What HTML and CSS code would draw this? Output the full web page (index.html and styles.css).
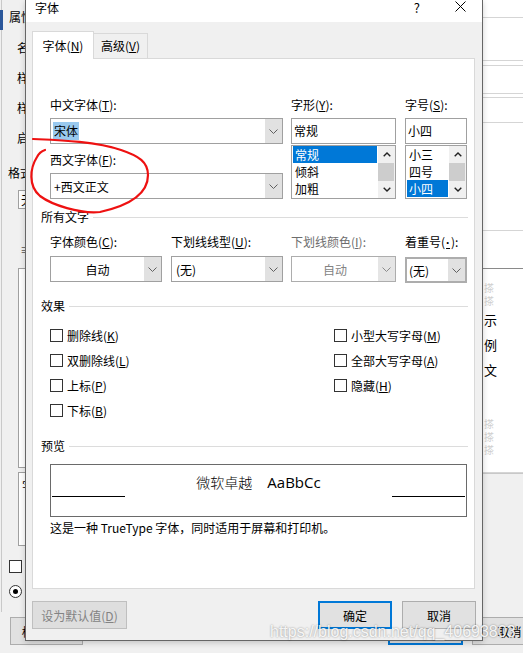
FILE: index.html
```html
<!DOCTYPE html>
<html lang="zh-CN">
<head>
<meta charset="utf-8">
<title>字体</title>
<link rel="stylesheet" href="styles.css">
</head>
<body>
<div class="desk">
  <div class="bg">
    <div class="bg-main">
      <div class="bg-left">
        <div class="bl-head"><span class="bl-accent"></span><span class="bl-title">属性</span></div>
        <div class="bl-item bl-first">名</div>
        <div class="bl-item">样</div>
        <div class="bl-item">样</div>
        <div class="bl-item">启</div>
        <div class="bl-fmt">格式</div>
        <div class="bl-box">无</div>
        <div class="bl-icon">≡</div>
        <div class="bl-panel"></div>
        <div class="bl-panel2">字</div>
        <div class="bl-check"></div>
        <div class="bl-radio"></div>
      </div>
      <div class="bg-mid"></div>
      <div class="bg-right">
        <div class="br-wrap">
          <div class="br-row br-a"></div>
          <div class="br-row br-b"></div>
          <div class="br-row br-c"></div>
          <div class="br-row br-d"></div>
          <div class="br-row br-e"></div>
          <div class="br-row br-f"></div>
          <div class="br-row br-g"></div>
          <div class="br-row br-h"></div>
          <div class="br-sample">
            <span class="br-faint">搽</span>
            <span class="br-faint">搽</span>
            <span class="br-big">示</span>
            <span class="br-big">例</span>
            <span class="br-big">文</span>
            <span class="br-faint br-f2">搽</span>
            <span class="br-faint">搽</span>
            <span class="br-faint">搽</span>
          </div>
        </div>
      </div>
    </div>
    <div class="bg-bottom">
      <div class="bg-btn bg-btn-fmt">格式(O) ▾</div>
      <div class="bg-btn bg-btn-ok">确定</div>
      <div class="bg-btn bg-btn-cancel">取消</div>
    </div>
  </div>

  <div class="dialog">
    <div class="titlebar">
      <span class="tb-title">字体</span>
      <span class="tb-help">?</span>
      <span class="tb-close"><svg width="11" height="11" viewBox="0 0 11 11"><path d="M0.5 0.5 L10.5 10.5 M10.5 0.5 L0.5 10.5" stroke="#000" stroke-width="1" fill="none"/></svg></span>
    </div>
    <div class="dlg-body">
      <div class="tabs">
        <div class="tab tab-active">字体(<u>N</u>)</div>
        <div class="tab">高级(<u>V</u>)</div>
      </div>
      <div class="panel">
        <div class="fgrid">
          <div class="stack span-a">
            <div class="lbl">中文字体(<u>T</u>):</div>
            <div class="combo"><span class="val"><span class="sel">宋体</span></span><span class="dd"><svg width="9" height="5" viewBox="0 0 9 5"><path d="M0.5 0.5 L4.5 4.5 L8.5 0.5" stroke="#606060" stroke-width="1" fill="none"/></svg></span></div>
            <div class="lbl lbl-2">西文字体(<u>F</u>):</div>
            <div class="combo"><span class="val">+西文正文</span><span class="dd"><svg width="9" height="5" viewBox="0 0 9 5"><path d="M0.5 0.5 L4.5 4.5 L8.5 0.5" stroke="#606060" stroke-width="1" fill="none"/></svg></span></div>
          </div>
          <div class="stack col-c">
            <div class="lbl">字形(<u>Y</u>):</div>
            <div class="tbox">常规</div>
            <div class="list">
              <div class="items">
                <div class="item on">常规</div>
                <div class="item">倾斜</div>
                <div class="item">加粗</div>
              </div>
              <div class="sbar">
                <span class="arr"><svg width="8" height="5" viewBox="0 0 8 5"><path d="M0.7 4.3 L4 1 L7.3 4.3" stroke="#222" stroke-width="1.4" fill="none"/></svg></span>
                <span class="thumb"></span>
                <span class="arr"><svg width="8" height="5" viewBox="0 0 8 5"><path d="M0.7 0.7 L4 4 L7.3 0.7" stroke="#222" stroke-width="1.4" fill="none"/></svg></span>
              </div>
            </div>
          </div>
          <div class="stack col-d">
            <div class="lbl">字号(<u>S</u>):</div>
            <div class="tbox">小四</div>
            <div class="list">
              <div class="items">
                <div class="item">小三</div>
                <div class="item">四号</div>
                <div class="item on">小四</div>
              </div>
              <div class="sbar">
                <span class="arr"><svg width="8" height="5" viewBox="0 0 8 5"><path d="M0.7 4.3 L4 1 L7.3 4.3" stroke="#222" stroke-width="1.4" fill="none"/></svg></span>
                <span class="thumb"></span>
                <span class="arr"><svg width="8" height="5" viewBox="0 0 8 5"><path d="M0.7 0.7 L4 4 L7.3 0.7" stroke="#222" stroke-width="1.4" fill="none"/></svg></span>
              </div>
            </div>
          </div>
        </div>

        <div class="sec sec-all"><span>所有文字</span></div>
        <div class="fgrid agrid">
          <div class="stack c1">
            <div class="lbl">字体颜色(<u>C</u>):</div>
            <div class="combo"><span class="val center">自动</span><span class="dd"><svg width="9" height="5" viewBox="0 0 9 5"><path d="M0.5 0.5 L4.5 4.5 L8.5 0.5" stroke="#606060" stroke-width="1" fill="none"/></svg></span></div>
          </div>
          <div class="stack c3">
            <div class="lbl">下划线线型(<u>U</u>):</div>
            <div class="combo"><span class="val pad5">(无)</span><span class="dd"><svg width="9" height="5" viewBox="0 0 9 5"><path d="M0.5 0.5 L4.5 4.5 L8.5 0.5" stroke="#606060" stroke-width="1" fill="none"/></svg></span></div>
          </div>
          <div class="stack c5">
            <div class="lbl dis">下划线颜色(<u>I</u>):</div>
            <div class="combo disabled"><span class="val center">自动</span><span class="dd"><svg width="9" height="5" viewBox="0 0 9 5"><path d="M0.5 0.5 L4.5 4.5 L8.5 0.5" stroke="#8a8a8a" stroke-width="1" fill="none"/></svg></span></div>
          </div>
          <div class="stack c7">
            <div class="lbl">着重号(<u class="dot">·</u>):</div>
            <div class="combo focus"><span class="val">(无)</span><span class="dd"><svg width="9" height="5" viewBox="0 0 9 5"><path d="M0.5 0.5 L4.5 4.5 L8.5 0.5" stroke="#606060" stroke-width="1" fill="none"/></svg></span></div>
          </div>
        </div>

        <div class="sec sec-fx"><span>效果</span></div>
        <div class="checks">
          <div class="ccol">
            <div class="chk"><span class="box"></span>删除线(<u>K</u>)</div>
            <div class="chk"><span class="box"></span>双删除线(<u>L</u>)</div>
            <div class="chk"><span class="box"></span>上标(<u>P</u>)</div>
            <div class="chk"><span class="box"></span>下标(<u>B</u>)</div>
          </div>
          <div class="ccol">
            <div class="chk"><span class="box"></span>小型大写字母(<u>M</u>)</div>
            <div class="chk"><span class="box"></span>全部大写字母(<u>A</u>)</div>
            <div class="chk"><span class="box"></span>隐藏(<u>H</u>)</div>
          </div>
        </div>

        <div class="sec sec-pv"><span>预览</span></div>
        <div class="preview">
          <span class="pv-line"></span>
          <span class="pv-text"><span class="pv-cn">微软卓越</span><span class="pv-en">AaBbCc</span></span>
          <span class="pv-line"></span>
        </div>
        <div class="note">这是一种 TrueType 字体，同时适用于屏幕和打印机。</div>
      </div>
      <div class="btn-row">
        <div class="btn btn-def">设为默认值(<u>D</u>)</div>
        <div class="btn btn-ok">确定</div>
        <div class="btn btn-cancel">取消</div>
      </div>
    </div>
  </div>

  <svg class="annot" width="523" height="653" viewBox="0 0 523 653">
    <path d="M33 139 C55 140 95 141 121 150 C139 156 148 162 148 175 C148 190 136 204 100 212 C80 214 52 205 40 196 C28 186 30 168 37 157 C39 153 42 151 45 150" fill="none" stroke="#ee1111" stroke-width="2.2" stroke-linecap="round"/>
  </svg>
  <div class="wm">https://blog.csdn.net/qq_40693803</div>
</div>
</body>
</html>
```

FILE: styles.css
```css
* { box-sizing: border-box; }
body {
  margin: 0;
  font-family: "Noto Sans CJK SC", "Noto Sans", sans-serif;
  font-size: 12px;
  color: #000;
  background: #f0f0f0;
}
u { text-decoration: underline; text-underline-offset: 1px; text-decoration-thickness: 1px; }
u.dot { font-family: "Liberation Sans", Arial, sans-serif; font-weight: bold; padding: 0 1px; }

.desk { position: relative; width: 523px; height: 653px; overflow: hidden; background: #f0f0f0; }

/* background window */
.bg { display: flex; flex-direction: column; height: 653px; }
.bg-main { display: flex; height: 612px; flex: none; }
.bg-left {
  width: 25px; flex: none; display: flex; flex-direction: column;
  background: linear-gradient(#c9c9c9, #c9c9c9) 1px 0 / 1px 100% no-repeat;
  white-space: nowrap;
}
.bg-mid { flex: 1; }
.bg-right { width: 40px; flex: none; }

.bl-head { display: flex; height: 30px; flex: none; }
.bl-accent { width: 3px; height: 20px; margin-top: 10px; background: #2b579a; flex: none; }
.bl-title { margin-left: 6px; margin-top: 9px; line-height: 16px; }
.bl-item { margin-top: 14px; padding-left: 17px; line-height: 16px; flex: none; }
.bl-first { margin-top: 10px; }
.bl-fmt { margin-top: 19px; padding-left: 8px; line-height: 16px; flex: none; }
.bl-box { margin: 9px 0 0 18px; width: 30px; height: 19px; border: 1px solid #a0a0a0; background: #fff; line-height: 17px; padding-left: 2px; flex: none; }
.bl-icon { margin: 33px 0 0 20px; line-height: 16px; color: #555; flex: none; }
.bl-panel { margin: 10px 0 0 18px; width: 30px; height: 200px; border: 1px solid #a0a0a0; background: #fff; flex: none; }
.bl-panel2 { margin: 4px 0 0 18px; width: 30px; height: 74px; border: 1px solid #a0a0a0; background: #fff; padding: 5px 0 0 3px; line-height: 16px; flex: none; }
.bl-check { margin: 14px 0 0 9px; width: 13px; height: 13px; border: 1px solid #333; background: #fff; flex: none; }
.bl-radio { margin: 12px 0 0 9px; width: 13px; height: 13px; border: 1px solid #333; border-radius: 50%; background: #fff; display: flex; align-items: center; justify-content: center; flex: none; }
.bl-radio::after { content: ""; width: 5px; height: 5px; border-radius: 50%; background: #000; }

.br-wrap { height: 474px; background: #fff; display: flex; flex-direction: column; border-bottom: 1px solid #c8c8c8; }
.br-row { flex: none; border-bottom: 1px solid #d5d5d5; }
.br-a { height: 18px; }
.br-b { height: 43px; }
.br-c { height: 5px; }
.br-d { height: 28px; }
.br-e { height: 4px; }
.br-f { height: 25px; }
.br-g { height: 108px; }
.br-h { height: 38px; border-bottom-color: #8a8a8a; }
.br-sample { display: flex; flex-direction: column; padding: 12px 0 0 1px; flex: 1; border-bottom: 1px solid #d5d5d5; }
.br-faint { color: #cfcfcf; font-size: 10px; line-height: 13px; }
.br-big { font-size: 13px; line-height: 25px; }
.br-f2 { margin-top: 35px; }

.bg-bottom { flex: 1; display: flex; align-items: flex-start; padding-top: 5px; }
.bg-btn { height: 28px; border: 1px solid #adadad; background: #e1e1e1; display: flex; align-items: center; justify-content: center; flex: none; white-space: nowrap; }
.bg-btn-fmt { margin-left: 10px; width: 73px; }
.bg-btn-ok { margin-left: 305px; width: 75px; border: 2px solid #0078d7; }
.bg-btn-cancel { margin-left: 9px; width: 75px; }

/* dialog */
.dialog {
  position: absolute; left: 25px; top: 0;
  width: 458px; height: 641px;
  border: 1px solid #666; border-top: none;
  background: #f0f0f0;
  display: flex; flex-direction: column;
  box-shadow: 0 2px 6px rgba(0,0,0,.18);
}
.titlebar { height: 22px; background: #fff; display: flex; flex: none; }
.tb-title { margin-left: 9px; line-height: 16px; }
.tb-help { margin-left: auto; margin-top: 1px; line-height: 14px; font-size: 13px; }
.tb-close { margin: 1px 16px 0 35px; width: 11px; height: 11px; display: flex; }

.dlg-body { flex: 1; display: flex; flex-direction: column; padding: 9px 7px 0 6px; }
.tabs { display: flex; align-items: flex-end; height: 28px; margin-bottom: -1px; position: relative; z-index: 1; flex: none; }
.tab {
  height: 25px; width: 55px; margin-left: -1px; margin-bottom: 1px;
  border: 1px solid #d9d9d9; border-bottom: none;
  background: #f0f0f0; text-align: center; padding-top: 4px; line-height: 16px;
}
.tab-active { height: 28px; width: 62px; margin-left: 0; margin-bottom: 0; background: #fff; padding-top: 6px; }

.panel {
  height: 531px; flex: none;
  border: 1px solid #d9d9d9; background: #fff;
  padding: 38px 6px 0 17px;
}
.fgrid { display: grid; grid-template-columns: 112px 9px 112px 8px 105px 9px 62px; }
.span-a { grid-column: 1 / 4; }
.col-c, .c5 { grid-column: 5; }
.col-d, .c7 { grid-column: 7; }
.c1 { grid-column: 1; }
.c3 { grid-column: 3; }
.stack { display: flex; flex-direction: column; }
.lbl { line-height: 16px; margin-bottom: 5px; white-space: nowrap; }
.lbl-2 { margin-top: 8px; }
.lbl.dis { color: #6d6d6d; }

.combo { height: 26px; border: 1px solid #a0a0a0; background: #fff; display: flex; }
.combo .val { flex: 1; display: flex; align-items: center; padding-left: 3px; white-space: nowrap; overflow: hidden; }
.combo .val.center { justify-content: center; padding-left: 0; }
.combo .val.pad5 { padding-left: 4px; }
.combo .dd { width: 17px; background: #e1e1e1; display: flex; align-items: center; justify-content: center; }
.sel { background: #99c9ef; line-height: 18px; padding: 0 1px; margin-left: -1px; }
.combo.disabled { border-color: #adadad; color: #838383; }
.combo.disabled .dd { background: #e5e5e5; }
.combo.focus { border: 2px solid #adadad; }
.combo.focus .val { padding-left: 2px; }

.tbox { height: 26px; border: 1px solid #a0a0a0; padding-left: 2px; line-height: 24px; }
.list { height: 54px; margin-top: 1px; border: 1px solid #a0a0a0; display: flex; padding-left: 1px; }
.items { flex: 1; margin-right: 1px; }
.item { height: 17px; line-height: 17px; padding-left: 2px; }
.item.on { background: #0078d7; color: #fff; }
.sbar { width: 17px; display: flex; flex-direction: column; background: #f0f0f0; }
.sbar .arr { height: 17px; display: flex; align-items: center; justify-content: center; }
.sbar .thumb { height: 18px; background: #cdcdcd; margin: 0 1px 0 0; }

.sec { display: flex; align-items: center; margin-left: -9px; line-height: 16px; white-space: nowrap; }
.sec::after { content: ""; flex: 1; height: 1px; background: #dcdcdc; margin-left: 4px; }
.sec-all { margin-top: 10px; }
.agrid { margin-top: 9px; }
.agrid .lbl { margin-bottom: 6px; }
.sec-fx { margin-top: 15px; }
.checks { display: grid; grid-template-columns: 284px auto; margin-top: 15px; }
.ccol { display: flex; flex-direction: column; gap: 12px; }
.chk { display: flex; align-items: center; height: 13px; line-height: 13px; white-space: nowrap; }
.box { width: 13px; height: 13px; border: 1px solid #333; background: #fff; margin-right: 4px; flex: none; }
.sec-pv { margin-top: 21px; }

.preview {
  margin-top: 10px; height: 53px; width: 417px;
  border: 1px solid #6a6a6a;
  display: flex; justify-content: space-between; align-items: flex-end;
  padding: 0 1px 19px;
}
.pv-line { width: 73px; height: 1px; background: #000; flex: none; }
.pv-text { align-self: center; line-height: 20px; padding-top: 3px; white-space: nowrap; }
.pv-cn { font-size: 14px; font-weight: 300; color: #000; }
.pv-en { font-family: "Open Sans", "Liberation Sans", Arial, sans-serif; font-size: 15px; margin-left: 15px; }
.note { margin-top: 3px; line-height: 16px; white-space: nowrap; }

.btn-row { display: flex; margin-top: 12px; margin-right: -1px; }
.btn { height: 28px; border: 1px solid #adadad; background: #e1e1e1; display: flex; align-items: center; justify-content: center; white-space: nowrap; }
.btn-def { width: 95px; color: #838383; border-color: #bfbfbf; background: #dedede; }
.btn-ok { width: 74px; margin-left: auto; border: 2px solid #0078d7; }
.btn-cancel { width: 74px; margin-left: 10px; }

.annot { position: absolute; left: 0; top: 0; pointer-events: none; }
.wm {
  position: absolute; left: 270px; top: 622px;
  font-family: "Liberation Sans", Arial, sans-serif; font-size: 16px; line-height: 20px;
  color: rgba(255,255,255,.9);
  text-shadow: 0 0 2px rgba(0,0,0,.45);
  white-space: nowrap;
}
```
